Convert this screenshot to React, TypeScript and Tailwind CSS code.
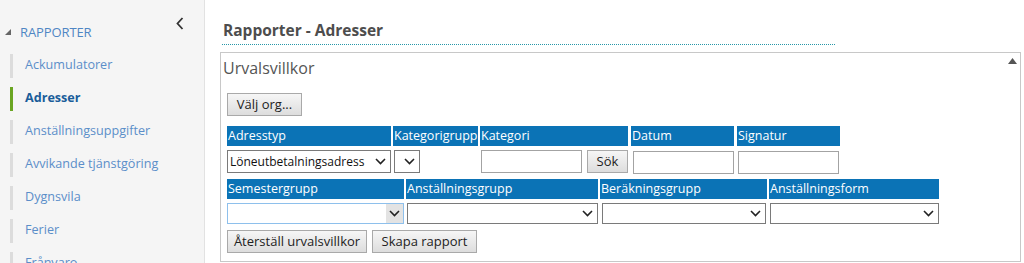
const font = { fontFamily: '"Open Sans", "Noto Sans", sans-serif' }

const links = [
  "Ackumulatorer",
  "Adresser",
  "Anställningsuppgifter",
  "Avvikande tjänstgöring",
  "Dygnsvila",
  "Ferier",
  "Frånvaro",
]

function Chevron() {
  return (
    <svg width="11" height="7" viewBox="0 0 11 7" className="shrink-0">
      <path d="M1 1l4.5 4.5L10 1" fill="none" stroke="#222" strokeWidth="1.6" />
    </svg>
  )
}

function Select({ w, value = "", focus = false }: { w: string; value?: string; focus?: boolean }) {
  return (
    <div
      className={`${w} h-full flex items-center bg-white border ${
        focus ? "border-[#8ec0ec]" : "border-[#7a7a7a]"
      }`}
    >
      <span className="flex-1 pl-[2px] text-[12px] text-[#111] leading-none whitespace-nowrap">{value}</span>
      <span
        className={`h-full flex items-center justify-center ${focus ? "w-[17px] bg-[#e3e3e3]" : "w-[20px]"}`}
      >
        <Chevron />
      </span>
    </div>
  )
}

function Button({ children, w }: { children: string; w: string }) {
  return (
    <button
      className={`${w} h-full border border-[#a9a9a9] bg-gradient-to-b from-[#f6f6f6] to-[#dddddd] text-[13px] text-[#222] leading-none`}
    >
      {children}
    </button>
  )
}

function Head({ w, children }: { w: string; children: string }) {
  return (
    <div className={`${w} h-[20px] bg-[#0b73b6] text-white text-[12.5px] leading-[20px] pl-[1px] whitespace-nowrap overflow-hidden`}>
      {children}
    </div>
  )
}

export default function App() {
  return (
    <div className="flex w-[1024px] h-[263px] overflow-hidden bg-white" style={font}>
      <aside className="relative w-[205px] shrink-0 bg-[#f5f5f5] border-r border-[#e2e2e2] pt-[24px]">
        <button className="absolute left-[175px] top-[16px] w-[10px] h-[14px] flex items-center justify-center">
          <svg width="8" height="13" viewBox="0 0 8 13">
            <path d="M6.5 1L1.5 6.5 6.5 12" fill="none" stroke="#333" strokeWidth="1.8" />
          </svg>
        </button>
        <div className="flex items-center h-[18px] pl-[5px]">
          <svg width="6" height="6" viewBox="0 0 6 6" className="mr-[9px] -mt-[3px]">
            <polygon points="6,0 6,6 0,6" fill="#666" />
          </svg>
          <span className="text-[13px] text-[#4f86c4] tracking-[-0.1px]">RAPPORTER</span>
        </div>
        <ul className="mt-[7px]">
          {links.map((l) => {
            const active = l === "Adresser"
            return (
              <li key={l} className="flex items-center h-[33px] pl-[10px]">
                <span className={`w-[3px] h-[24px] ${active ? "bg-[#6aa522]" : "bg-[#dcdcdc]"}`} />
                <span
                  className={`ml-[12px] text-[12.6px] whitespace-nowrap ${
                    active ? "font-bold text-[#1a5d9a]" : "text-[#5b8ec9]"
                  }`}
                >
                  {l}
                </span>
              </li>
            )
          })}
        </ul>
      </aside>

      <main className="flex-1 pl-[15px] pr-[3px]">
        <div className="ml-[2px] mt-[20px] w-[613px] border-b border-dotted border-[#2797a8] pb-[4px]">
          <h1 className="text-[15.5px] font-bold text-[#4d4d4d] leading-[20px] pl-[1px]">Rapporter - Adresser</h1>
        </div>

        <section className="relative mt-[7px] h-[210px] border border-[#c8c8c8] pl-[6px] pt-[4px]">
          <svg width="9" height="6" viewBox="0 0 9 6" className="absolute right-[3px] top-[5px]">
            <polygon points="0,6 4.5,0 9,6" fill="#555" />
          </svg>
          <h2 className="-ml-[4px] text-[16px] text-[#555] leading-[22px]">Urvalsvillkor</h2>

          <div className="mt-[12px] h-[23px]">
            <Button w="w-[75px]">Välj org...</Button>
          </div>

          <div className="mt-[12px] flex gap-[2px]">
            <div className="w-[164px] flex flex-col">
              <Head w="w-full">Adresstyp</Head>
              <div className="mt-[4px] h-[23px]">
                <Select w="w-[164px]" value="Löneutbetalningsadress" />
              </div>
            </div>
            <div className="w-[85px] flex flex-col">
              <Head w="w-full">Kategorigrupp</Head>
              <div className="mt-[4px] h-[23px] pl-[1px]">
                <Select w="w-[26px]" />
              </div>
            </div>
            <div className="w-[148px] flex flex-col">
              <Head w="w-full">Kategori</Head>
              <div className="mt-[4px] h-[23px] pl-[1px] flex gap-[5px]">
                <input className="w-[101px] h-full border border-[#a3a3a3] bg-white" />
                <Button w="w-[41px]">Sök</Button>
              </div>
            </div>
            <div className="ml-[1px] w-[103px] flex flex-col">
              <Head w="w-full">Datum</Head>
              <div className="mt-[4px] h-[23px] pl-[2px]">
                <input className="w-[101px] h-full border border-[#a3a3a3] bg-white" />
              </div>
            </div>
            <div className="ml-[1px] w-[103px] flex flex-col">
              <Head w="w-full">Signatur</Head>
              <div className="mt-[4px] h-[23px] pl-[1px]">
                <input className="w-[101px] h-full border border-[#a3a3a3] bg-white" />
              </div>
            </div>
          </div>

          <div className="mt-[6px] flex gap-[2px]">
            <div className="w-[177px] flex flex-col">
              <Head w="w-full">Semestergrupp</Head>
              <div className="mt-[4px] h-[21px]">
                <Select w="w-[177px]" focus />
              </div>
            </div>
            <div className="w-[192px] flex flex-col">
              <Head w="w-full">Anställningsgrupp</Head>
              <div className="mt-[4px] h-[21px] pl-[1px]">
                <Select w="w-[191px]" />
              </div>
            </div>
            <div className="w-[167px] flex flex-col">
              <Head w="w-full">Beräkningsgrupp</Head>
              <div className="mt-[4px] h-[21px] pl-[2px]">
                <Select w="w-[164px]" />
              </div>
            </div>
            <div className="w-[170px] flex flex-col">
              <Head w="w-full">Anställningsform</Head>
              <div className="mt-[4px] h-[21px] pl-[1px]">
                <Select w="w-[169px]" />
              </div>
            </div>
          </div>

          <div className="mt-[6px] h-[23px] flex gap-[5px]">
            <Button w="w-[140px]">Återställ urvalsvillkor</Button>
            <Button w="w-[105px]">Skapa rapport</Button>
          </div>
        </section>
      </main>
    </div>
  )
}
